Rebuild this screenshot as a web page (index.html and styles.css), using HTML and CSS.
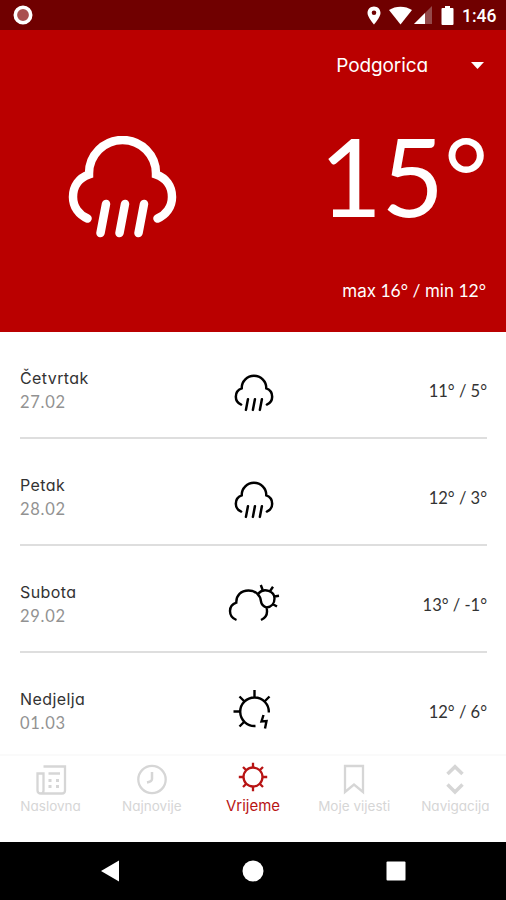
FILE: index.html
```html
<!DOCTYPE html>
<html lang="sr-Latn">
<head>
<meta charset="utf-8">
<title>Vrijeme</title>
<link rel="stylesheet" href="styles.css">
</head>
<body>
<svg class="defs" aria-hidden="true">
  <symbol id="rain" viewBox="18 16 109 102">
    <path d="M37.5 98.5C29 95 23 87 23 77C23 66 29 58 39 54.5V53.5A33.5 33.5 0 0 1 106 53.5V54.5C116 58 122 66 122 77C122 87 116 95 107.5 98.5M56 84L50.5 113M75 84L69.5 113M94 84L88.5 113"/>
  </symbol>
</svg>
<div class="screen">
  <header class="status">
    <svg class="record" viewBox="0 0 20 20"><circle cx="10" cy="10" r="7.7" fill="#a95050" stroke="#fff" stroke-width="3.6"/></svg>
    <div class="status-right">
      <svg class="pin" viewBox="0 0 14 19"><path fill="#fff" fill-rule="evenodd" d="M7 .5C3.300 .5.500 3.300.500 7C.500 11 7 18.500 7 18.500S13.500 11 13.500 7C13.500 3.300 10.700.500 7 .5M7 4.500A2.300 2.300 0 1 1 7 9.100A2.300 2.300 0 1 1 7 4.500"/></svg>
      <svg class="wifi" viewBox="0 0 23 19"><path fill="#fff" d="M0 4C6.500-.5 16.500-.5 23 4L11.500 18.500Z"/></svg>
      <svg class="signal" viewBox="0 0 18 18"><path fill="#94494a" d="M18 0V18H0Z"/><path fill="#fff" d="M11 7V18H0Z"/></svg>
      <svg class="battery" viewBox="0 0 13 19"><path fill="#fff" d="M4 0H9V2H11.500Q12.500 2 12.500 3V18Q12.500 19 11.500 19H1.500Q.500 19 .500 18V3Q.500 2 1.500 2H4Z"/></svg>
      <span class="clock">1:46</span>
    </div>
  </header>

  <section class="current">
    <div class="city"><span class="city-name">Podgorica</span><svg class="caret" viewBox="0 0 13 7"><path fill="#fff" d="M0 0H13L6.500 7Z"/></svg></div>
    <div class="now">
      <svg class="now-icon"><use href="#rain"/></svg>
      <div class="temp">15°</div>
    </div>
    <div class="range"><span class="word">max</span> 16° / <span class="word">min</span> 12°</div>
  </section>

  <main class="days">
    <article class="day">
      <div class="when"><div class="name">Četvrtak</div><div class="date">27.02</div></div>
      <svg class="icon-rain"><use href="#rain"/></svg>
      <div class="minmax">11° / 5°</div>
    </article>
    <article class="day">
      <div class="when"><div class="name">Petak</div><div class="date">28.02</div></div>
      <svg class="icon-rain"><use href="#rain"/></svg>
      <div class="minmax">12° / 3°</div>
    </article>
    <article class="day">
      <div class="when"><div class="name">Subota</div><div class="date">29.02</div></div>
      <svg class="icon-cloud" viewBox="0 0 52 40"><path d="M8.500 37C4.500 35.500 2 32 2 28C2 24 4.500 21 8.300 19.700C8 12.500 13 7.500 20.500 7.500C27.500 7.500 32.500 12 33 18.500C33.400 21 35.500 23.500 38.500 24.500C39.800 29.500 38.500 34.500 33 37M30.500 10.300C36 4.500 46.500 8 46.500 15.500C46.500 20.500 43.500 24 38.500 24.500M34.500 6.500L32.800 2M42.300 7.700L45 3.800M46.500 13.500L51 12.800M45 21.300L49 23.500"/></svg>
      <div class="minmax">13° / -1°</div>
    </article>
    <article class="day">
      <div class="when"><div class="name">Nedjelja</div><div class="date">01.03</div></div>
      <svg class="icon-storm" viewBox="0 0 40 42"><path d="M22.500 37A14.300 14.300 0 1 1 35.800 23.500M21.500 1V8.300M6.500 7.500L11 12M36.500 7.500L32 12M.500 22.500H7.200M6.500 37.500L11 33M30.500 26L28.500 32.500L33.500 32L32 39.500"/></svg>
      <div class="minmax">12° / 6°</div>
    </article>
  </main>

  <nav class="tabs">
    <div class="tab"><svg viewBox="0 0 32 32"><path d="M8.500 2.500H30V26.500Q30 29.500 27 29.500H6Q2.500 29.500 2.500 26.500V9.500H8.500V26.500Q8.500 29.500 6 29.500M13.500 9.500H25"/><path d="M13.500 16.500H16.500M21 16.500H24M13.500 22.500H16.500M21 22.500H24" stroke-width="3"/></svg><span>Naslovna</span></div>
    <div class="tab"><svg viewBox="0 0 32 32"><circle cx="16" cy="15.500" r="13.700"/><path d="M16 8V15Q16 17.500 11 18.500" stroke-width="2.500"/></svg><span>Najnovije</span></div>
    <div class="tab active"><svg viewBox="0 0 32 32"><circle cx="16" cy="15" r="9.500"/><path d="M16 .8V5.500M16 24.500V29.200M1.800 15H6.500M25.500 15H30.200M6 5L9.300 8.300M22.700 21.700L26 25M26 5L22.700 8.300M9.300 21.700L6 25"/></svg><span>Vrijeme</span></div>
    <div class="tab"><svg viewBox="0 0 32 32"><path d="M7 2H25V28L16 20.500L7 28Z"/></svg><span>Moje vijesti</span></div>
    <div class="tab"><svg viewBox="0 0 32 32"><path d="M8.500 10L16 2.800L23.500 10M8.500 20.500L16 28L23.500 20.500" stroke-width="3.500"/></svg><span>Navigacija</span></div>
  </nav>

  <footer class="system">
    <svg viewBox="0 0 22 22"><path d="M1 11L19 .5V21.500Z"/></svg>
    <svg viewBox="0 0 22 22"><circle cx="11" cy="11" r="10.500"/></svg>
    <svg viewBox="0 0 22 22"><rect x="1.500" y="1.500" width="19" height="19" rx="1"/></svg>
  </footer>
</div>
</body>
</html>
```

FILE: styles.css
```css
* { box-sizing: border-box; }
body { margin: 0; background: #fff; color: #333; font-family: Inter, "Liberation Sans", sans-serif; font-feature-settings: "cv11"; }
svg { display: block; flex: none; fill: none; }
.defs { display: none; }
.screen { width: 506px; height: 900px; display: flex; flex-direction: column; overflow: hidden; }

.status { height: 30px; flex: none; background: #700000; display: flex; align-items: center; justify-content: space-between; padding: 0 9px 0 12.5px; }
.record { width: 20px; height: 20px; }
.status-right { display: flex; align-items: center; }
.pin { width: 14px; height: 19px; margin-right: 8px; }
.wifi { width: 23px; height: 19px; margin-right: 2px; }
.signal { width: 18px; height: 18px; margin-right: 9px; }
.battery { width: 13px; height: 19px; margin-right: 8px; }
.clock { width: 35px; font: 500 17.5px/30px Roboto, sans-serif; color: #fff; white-space: nowrap; padding-top: 2px; }

.current { height: 302px; flex: none; background: #ba0000; color: #fff; padding: 22px 20px 0; }
.city { height: 26px; display: flex; align-items: center; justify-content: flex-end; gap: 43px; padding-right: 2px; font-size: 19px; }
.city-name { letter-spacing: -.1px; }
.caret { width: 13px; height: 7px; }
.now { height: 140px; margin-top: 28px; display: flex; justify-content: space-between; padding-left: 48px; }
.now-icon { width: 109px; height: 102px; margin-top: 30px; stroke: #fff; stroke-width: 8.5; stroke-linecap: round; }
.temp { font: 400 108px/139px Lato, sans-serif; letter-spacing: -.5px; margin-right: -2px; }
.range { margin-top: 32px; text-align: right; font: 400 17.5px/26px Lato, sans-serif; white-space: nowrap; }
.word { font-family: Inter, sans-serif; font-size: 17px; }

.days { height: 422px; flex: none; padding: 0 19px 0 20px; overflow: hidden; }
.day { height: 107px; display: grid; grid-template-columns: 1fr 52px 1fr; align-items: center; justify-items: center; border-bottom: 2px solid #dedede; padding-top: 13px; }
.day:last-child { border-bottom-color: transparent; }
.when { justify-self: start; }
.name { font-size: 16px; line-height: 23px; letter-spacing: .4px; }
.date { font: 400 16.5px/25px Lato, sans-serif; color: #929292; letter-spacing: .7px; }
.icon-rain { width: 40px; height: 38px; margin-top: 4px; stroke: #000; stroke-width: 6.8; stroke-linecap: round; }
.icon-cloud { width: 52px; height: 40px; margin-bottom: 5px; stroke: #000; stroke-width: 2.4; }
.icon-storm { width: 40px; height: 42px; margin: 0 2px 4px 0; stroke: #000; stroke-width: 2.4; }
.minmax { justify-self: end; font: 400 16.5px/24px Lato, sans-serif; white-space: nowrap; }

.tabs { height: 88px; flex: none; display: grid; grid-template-columns: repeat(5, 1fr); border-top: 2px solid #fafafa; background: #fff; color: #d6d6d6; }
.tab { display: flex; flex-direction: column; align-items: center; padding-top: 8px; font-size: 13.5px; line-height: 20px; white-space: nowrap; }
.tab svg { width: 32px; height: 32px; stroke: currentColor; stroke-width: 2.3; }
.tab.active { color: #b81414; padding-top: 6px; font-size: 15px; line-height: 23px; }

.system { height: 58px; flex: none; background: #000; display: flex; justify-content: center; gap: 120.5px; padding-top: 18px; }
.system svg { width: 22px; height: 22px; fill: #fff; }
```
